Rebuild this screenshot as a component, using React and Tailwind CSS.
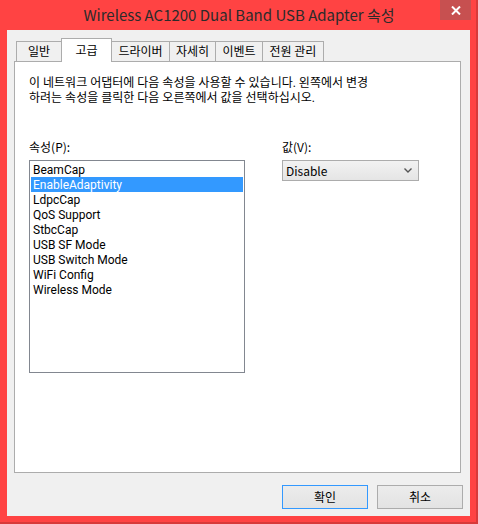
import { useState } from 'react';

const TABS = [
  { label: '일반', w: 'w-[46px]' },
  { label: '고급', w: 'w-[51px]' },
  { label: '드라이버', w: 'w-[59px]' },
  { label: '자세히', w: 'w-[47px]' },
  { label: '이벤트', w: 'w-[48px]' },
  { label: '전원 관리', w: 'w-[62px]' },
];

const PROPS = [
  'BeamCap',
  'EnableAdaptivity',
  'LdpcCap',
  'QoS Support',
  'StbcCap',
  'USB SF Mode',
  'USB Switch Mode',
  'WiFi Config',
  'Wireless Mode',
];

const font = "font-['Noto_Sans_CJK_KR','Noto_Sans',sans-serif]";
// Roboto first keeps the line boxes tight; Korean falls back to Noto CJK
const tight = "font-['Roboto','Noto_Sans_CJK_KR',sans-serif]";

export default function App() {
  const [tab] = useState(1);
  const [selected, setSelected] = useState(1);

  return (
    <div className={`w-[478px] h-[524px] bg-[#ff4343] border-r-2 border-b-2 border-[#d83a3a] flex flex-col ${font} text-[12px] text-black`}>
      {/* title bar */}
      <div className="relative h-[30px] flex items-center justify-center">
        <span className="text-[15px] text-[#2b2b2b] mt-[1px] ml-[2px]">Wireless AC1200 Dual Band USB Adapter 속성</span>
        <button className="absolute right-[5px] top-0 w-[31px] h-[20px] bg-[#c75050] flex items-center justify-center">
          <svg width="10" height="9" viewBox="0 0 10 9">
            <path d="M1 0.5 L9 8.5 M9 0.5 L1 8.5" stroke="white" strokeWidth="2" />
          </svg>
        </button>
      </div>

      {/* client area */}
      <div className="flex-1 flex ml-[7px] mr-[6px]">
        <div className="flex-1 bg-[#f0f0f0] flex flex-col">
          {/* tabs */}
          <div className="flex items-end pl-[9px] h-[31px]">
            {TABS.map((t, i) =>
              i === tab ? (
                <div
                  key={t.label}
                  className={`${t.w} h-[24px] -mb-px -ml-px relative z-10 bg-white border border-b-0 border-[#acacac] flex items-start pt-[2px] justify-center`}
                >
                  {t.label}
                </div>
              ) : (
                <div
                  key={t.label}
                  className={`${t.w} h-[20px] -ml-px first:ml-0 bg-[#f0f0f0] border border-b-0 border-[#acacac] flex items-center justify-center pb-[1px]`}
                >
                  {t.label}
                </div>
              )
            )}
          </div>

          {/* panel */}
          <div className="ml-[7px] w-[447px] h-[412px] bg-white border border-[#acacac] pl-[14px] pt-[14px]">
            <div className={`${tight} leading-[15px]`}>
              <div>이 네트워크 어댑터에 다음 속성을 사용할 수 있습니다. 왼쪽에서 변경</div>
              <div>하려는 속성을 클릭한 다음 오른쪽에서 값을 선택하십시오.</div>
            </div>

            <div className="flex mt-[33px]">
              <div className="flex flex-col">
                <span className="leading-[15px]">속성(P):</span>
                <div className={`mt-[6px] w-[216px] h-[213px] border border-[#828790] p-[1px] ${tight}`}>
                  {PROPS.map((p, i) => (
                    <div
                      key={p}
                      onClick={() => setSelected(i)}
                      className={`h-[15px] leading-[15px] pl-[2px] pt-[1px] ${
                        i === selected ? 'bg-[#3399ff] text-white' : ''
                      }`}
                    >
                      {p}
                    </div>
                  ))}
                </div>
              </div>

              <div className="flex flex-col ml-[37px]">
                <span className="leading-[15px]">값(V):</span>
                <div className="mt-[6px] w-[137px] h-[21px] border border-[#acacac] bg-gradient-to-b from-[#f2f2f2] to-[#e5e5e5] flex items-center justify-between pl-[3px] pr-[6px]">
                  <span>Disable</span>
                  <svg width="8" height="5" viewBox="0 0 8 5">
                    <path d="M0.5 0.5 L4 4 L7.5 0.5" stroke="#555" strokeWidth="1.4" fill="none" />
                  </svg>
                </div>
              </div>
            </div>
          </div>

          {/* buttons */}
          <div className="flex justify-end gap-[9px] mt-[12px] pr-[7px]">
            <button className="w-[86px] h-[24px] border border-[#3399ff] bg-gradient-to-b from-[#ececec] to-[#e3e3e3] flex items-center justify-center">
              확인
            </button>
            <button className="w-[86px] h-[24px] border border-[#acacac] bg-gradient-to-b from-[#ececec] to-[#e3e3e3] flex items-center justify-center">
              취소
            </button>
          </div>
        </div>
      </div>
      <div className="h-[6px]" />
    </div>
  );
}
